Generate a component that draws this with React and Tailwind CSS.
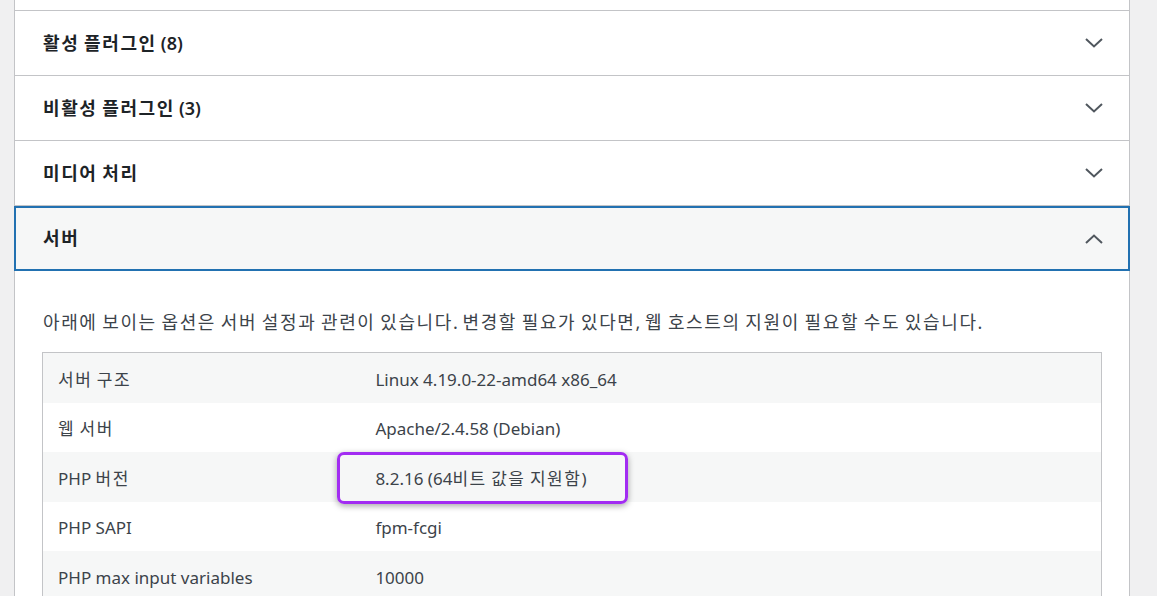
import React from 'react';

// Site health "info" tab – accordion sections, server section open
const sections = [
  { title: '활성 플러그인', count: '(8)' },
  { title: '비활성 플러그인', count: '(3)' },
  { title: '미디어 처리' },
];

const serverRows = [
  { label: '서버 구조', value: 'Linux 4.19.0-22-amd64 x86_64' },
  { label: '웹 서버', value: 'Apache/2.4.58 (Debian)' },
  { label: 'PHP 버전', value: '8.2.16 (64비트 값을 지원함)' },
  { label: 'PHP SAPI', value: 'fpm-fcgi' },
  { label: 'PHP max input variables', value: '10000' },
];

// hangul glyphs of the screenshot font run wider than Noto CJK, pad them a bit
const Ko = ({ text }) =>
  text.split(/([가-힣]+)/).map((part, i) =>
    /[가-힣]/.test(part) ? (
      <span key={i} className="tracking-[0.09em]">{part}</span>
    ) : (
      <React.Fragment key={i}>{part}</React.Fragment>
    )
  );

const Chevron = ({ up }) => (
  <svg width="18" height="10" viewBox="0 0 18 10" className="shrink-0">
    <polyline
      points={up ? '1,9 9,1.5 17,9' : '1,1 9,8.5 17,1'}
      fill="none"
      stroke="#50575e"
      strokeWidth="2"
    />
  </svg>
);

const AccordionRow = ({ title, count }) => (
  <div className="border-t border-[#c3c4c7] h-[65px] flex items-center justify-between pl-[28px] pr-[26px]">
    <span className="text-[18px] font-semibold text-[#1d2327]">
      <Ko text={title} />
      {count && <span className="ml-1">{count}</span>}
    </span>
    <Chevron />
  </div>
);

export default function App() {
  return (
    <div
      className="w-full h-[596px] bg-[#f0f0f1] overflow-hidden"
      style={{ fontFamily: '"Noto Sans", "Noto Sans CJK KR", sans-serif' }}
    >
      <div className="ml-[14px] w-[1116px] h-full bg-white border-x border-[#c3c4c7] pt-[10px]">
        {sections.map((s) => (
          <AccordionRow key={s.title} {...s} />
        ))}

        {/* opened section */}
        <div className="border-t border-[#c3c4c7]">
          <div className="-mx-px h-[65px] bg-[#f6f7f7] border-2 border-[#2271b1] flex items-center justify-between pl-[27px] pr-[25px]">
            <span className="text-[18px] font-semibold text-[#1d2327]">
              <Ko text="서버" />
            </span>
            <Chevron up />
          </div>
        </div>

        <div className="px-[27px] pt-[38px]">
          <p className="text-[18px] text-[#3c434a] leading-[26px] pl-px">
            <Ko text="아래에 보이는 옵션은 서버 설정과 관련이 있습니다. 변경할 필요가 있다면, 웹 호스트의 지원이 필요할 수도 있습니다." />
          </p>

          <div className="relative mt-[17px] border border-[#c3c4c7]">
            {serverRows.map((r, i) => (
              <div
                key={r.label}
                className={`flex items-center h-[49.6px] pt-[3px] text-[17px] text-[#3c434a] ${i % 2 === 0 ? 'bg-[#f6f7f7]' : 'bg-white'}`}
              >
                <div className="w-[30%] pl-[15px]"><Ko text={r.label} /></div>
                <div className="flex-1 pl-[15px]"><Ko text={r.value} /></div>
              </div>
            ))}

            {/* highlight around PHP version */}
            <div className="absolute left-[294px] top-[99px] w-[291px] h-[52px] rounded-[7px] border-[3px] border-[#a22cf2] shadow-[0_2px_6px_rgba(0,0,0,0.35)]" />
          </div>
        </div>
      </div>
    </div>
  );
}
